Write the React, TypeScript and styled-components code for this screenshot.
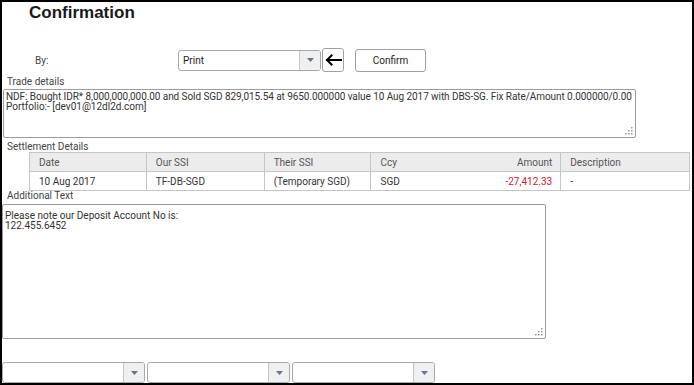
import * as React from 'react'
import styled, { createGlobalStyle } from 'styled-components'

const GlobalStyle = createGlobalStyle`
  html, body {
    margin: 0;
    padding: 0;
    background: #fff;
  }
  body {
    font-family: Roboto, "Liberation Sans", Arial, sans-serif;
    font-size: 10px;
    color: #333;
  }
`

interface Column {
  title: string
  width: number
  align?: 'left' | 'right'
  noBorder?: boolean
}

const columns: Column[] = [
  { title: 'Date', width: 117 },
  { title: 'Our SSI', width: 118 },
  { title: 'Their SSI', width: 107 },
  { title: 'Ccy', width: 100, noBorder: true },
  { title: 'Amount', width: 90, align: 'right' },
  { title: 'Description', width: 129 }
]

const settlementRow = ['10 Aug 2017', 'TF-DB-SGD', '(Temporary SGD)', 'SGD', '-27,412.33', '-']

const Grip = () => (
  <GripIcon width="8" height="8" viewBox="0 0 8 8">
    {[
      [6, 0],
      [6, 3],
      [3, 3],
      [6, 6],
      [3, 6],
      [0, 6]
    ].map(([x, y]) => (
      <rect key={`${x}-${y}`} x={x} y={y} width="1.5" height="1.5" fill="#9a9a9a" />
    ))}
  </GripIcon>
)

const Caret = () => (
  <svg width="7" height="4" viewBox="0 0 7 4">
    <path d="M0 0 L7 0 L3.5 4 Z" fill="#6b7380" />
  </svg>
)

const Dropdown = ({ value, width }: { value?: string; width: number }) => (
  <SelectBox style={{ width }}>
    <SelectValue>{value}</SelectValue>
    <SelectButton>
      <Caret />
    </SelectButton>
  </SelectBox>
)

export default function App() {
  return (
    <>
      <GlobalStyle />
      <Frame>
        <Title>Confirmation</Title>

        <ByRow>
          <ByLabel>By:</ByLabel>
          <Dropdown value="Print" width={143} />
          <IconButton>
            <svg width="17" height="12" viewBox="0 0 17 12">
              <path
                d="M16 6 H2 M6.5 1.5 L2 6 L6.5 10.5"
                fill="none"
                stroke="#000"
                strokeWidth="2"
                strokeLinecap="square"
              />
            </svg>
          </IconButton>
          <Button>Confirm</Button>
        </ByRow>

        <Label $top={5}>Trade details</Label>
        <TextBox $top={2} $left={1} $width={633} $height={49} $padTop={2}>
          <Line $tight>
            NDF: Bought IDR* 8,000,000,000.00 and Sold SGD 829,015.54 at 9650.000000 value 10 Aug
            2017 with DBS-SG. Fix Rate/Amount 0.000000/0.00
          </Line>
          <Line>Portfolio:- [dev01@12dl2d.com]</Line>
          <Grip />
        </TextBox>

        <Label $top={4}>Settlement Details</Label>
        <Table>
          <HeaderRow>
            {columns.map(c => (
              <Cell key={c.title} $width={c.width} $align={c.align} $noBorder={c.noBorder}>
                {c.title}
              </Cell>
            ))}
          </HeaderRow>
          <BodyRow>
            {settlementRow.map((v, i) => (
              <Cell
                key={i}
                $width={columns[i].width}
                $align={columns[i].align}
                $noBorder={columns[i].noBorder}
                $negative={v.startsWith('-') && v.length > 1}
              >
                {v}
              </Cell>
            ))}
          </BodyRow>
        </Table>

        <Label $top={0}>Additional Text</Label>
        <TextBox $top={3} $left={0} $width={544} $height={135} $padTop={6}>
          <Line>Please note our Deposit Account No is:</Line>
          <Line>122.455.6452</Line>
          <Grip />
        </TextBox>

        <BottomRow>
          <Dropdown width={143} />
          <Dropdown width={143} />
          <Dropdown width={143} />
        </BottomRow>
      </Frame>
    </>
  )
}

const Frame = styled.div`
  width: 694px;
  height: 385px;
  box-sizing: border-box;
  border: 2px solid #000;
  overflow: hidden;
  background: #fff;
`

const Title = styled.h1`
  margin: 0;
  padding-left: 27px;
  font-family: "Liberation Sans", Arial, sans-serif;
  font-size: 17px;
  line-height: 22px;
  font-weight: bold;
  color: #1a1a1a;
`

const ByRow = styled.div`
  display: flex;
  align-items: center;
  height: 24px;
  margin-top: 24px;
`

const ByLabel = styled.span`
  width: 143px;
  padding-left: 33px;
  color: #444;
`

const SelectBox = styled.div`
  display: flex;
  box-sizing: border-box;
  height: 21px;
  border: 1px solid #a9a9a9;
  border-radius: 3px;
  background: #fff;
  overflow: hidden;
`

const SelectValue = styled.div`
  flex: 1;
  padding-left: 4px;
  line-height: 19px;
  color: #222;
`

const SelectButton = styled.div`
  width: 20px;
  display: flex;
  align-items: center;
  justify-content: center;
  border-left: 1px solid #c8c8c8;
  background: #eff0f1;
`

const IconButton = styled.div`
  box-sizing: border-box;
  width: 22px;
  height: 24px;
  margin-left: 1px;
  border: 1px solid #a0a0a0;
  border-radius: 3px;
  display: flex;
  align-items: center;
  justify-content: center;
  background: #fff;
`

const Button = styled.div`
  box-sizing: border-box;
  width: 71px;
  height: 23px;
  margin-left: 11px;
  border: 1px solid #a0a0a0;
  border-radius: 3px;
  display: flex;
  align-items: center;
  justify-content: center;
  color: #222;
  background: #fff;
`

const Label = styled.div<{ $top: number }>`
  margin-top: ${p => p.$top}px;
  padding-left: 5px;
  line-height: 10px;
  color: #444;
`

const TextBox = styled.div<{
  $top: number
  $left: number
  $width: number
  $height: number
  $padTop: number
}>`
  position: relative;
  box-sizing: border-box;
  margin-top: ${p => p.$top}px;
  margin-left: ${p => p.$left}px;
  width: ${p => p.$width}px;
  height: ${p => p.$height}px;
  padding: ${p => p.$padTop}px 0 0 2px;
  border: 1px solid #9c9c9c;
  border-radius: 2px;
  line-height: 10px;
  color: #333;
  background: #fff;
`

const Line = styled.div<{ $tight?: boolean }>`
  white-space: nowrap;
  letter-spacing: ${p => (p.$tight ? '-0.07px' : 'normal')};
`

const GripIcon = styled.svg`
  position: absolute;
  right: 2px;
  bottom: 2px;
`

const Table = styled.div`
  margin-top: 0;
  margin-left: 27px;
  width: 661px;
  border-top: 1px solid #c6c6c6;
  border-left: 1px solid #c6c6c6;
  box-sizing: border-box;
`

const HeaderRow = styled.div`
  display: flex;
  height: 19px;
  background: #ececec;
  border-bottom: 1px solid #c6c6c6;
  box-sizing: border-box;
  color: #555;
`

const BodyRow = styled.div`
  display: flex;
  height: 19px;
  border-bottom: 1px solid #c6c6c6;
  box-sizing: border-box;
  color: #333;
`

const Cell = styled.div<{
  $width: number
  $align?: 'left' | 'right'
  $noBorder?: boolean
  $negative?: boolean
}>`
  box-sizing: border-box;
  width: ${p => p.$width}px;
  padding: 0 8px 0 9px;
  display: flex;
  align-items: center;
  justify-content: ${p => (p.$align === 'right' ? 'flex-end' : 'flex-start')};
  border-right: ${p => (p.$noBorder ? 'none' : '1px solid #c6c6c6')};
  color: ${p => (p.$negative ? '#d0202a' : 'inherit')};
  white-space: nowrap;
`

const BottomRow = styled.div`
  display: flex;
  gap: 2px;
  margin-top: 23px;
`
